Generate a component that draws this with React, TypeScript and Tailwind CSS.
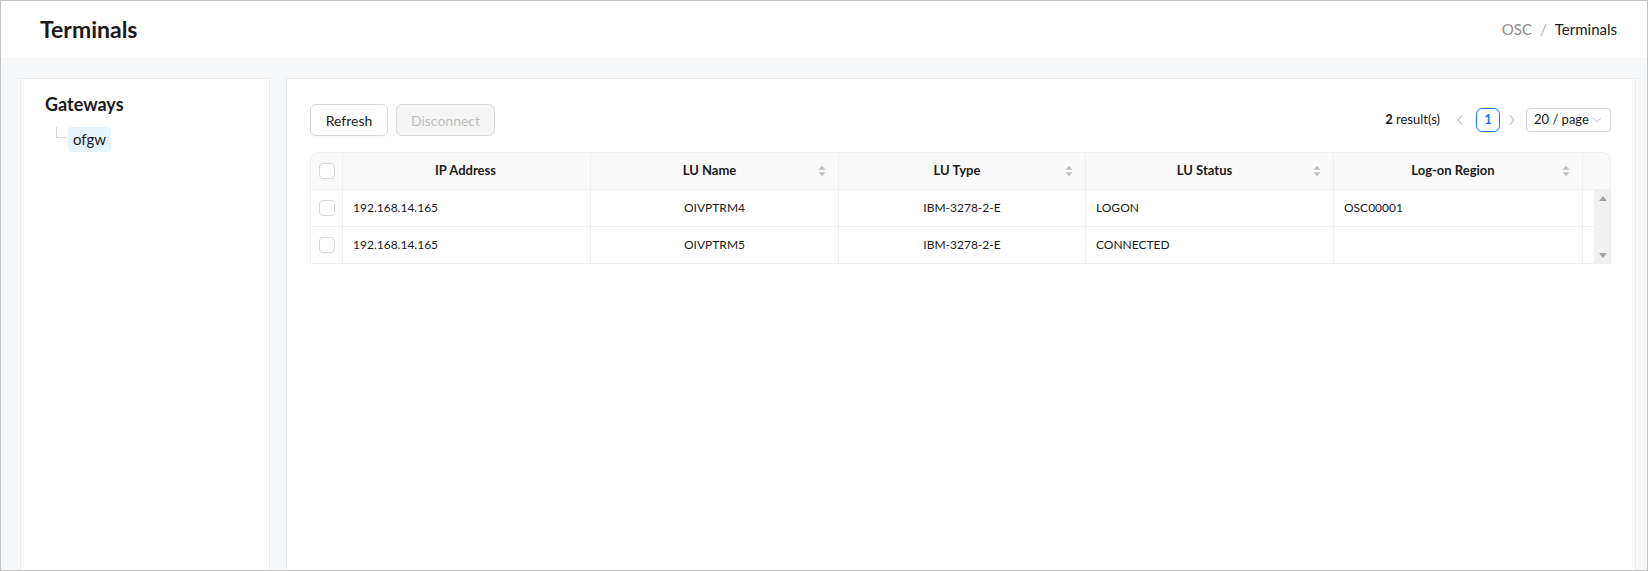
import React from 'react';

const cols = [
  { key: 'ip', label: 'IP Address', sortable: false, align: 'left' },
  { key: 'luName', label: 'LU Name', sortable: true, align: 'center' },
  { key: 'luType', label: 'LU Type', sortable: true, align: 'center' },
  { key: 'luStatus', label: 'LU Status', sortable: true, align: 'left' },
  { key: 'region', label: 'Log-on Region', sortable: true, align: 'left' },
];

const rows = [
  { ip: '192.168.14.165', luName: 'OIVPTRM4', luType: 'IBM-3278-2-E', luStatus: 'LOGON', region: 'OSC00001' },
  { ip: '192.168.14.165', luName: 'OIVPTRM5', luType: 'IBM-3278-2-E', luStatus: 'CONNECTED', region: '' },
];

const SortIcon = () => (
  <svg width="8" height="12" viewBox="0 0 8 12" className="shrink-0">
    <path d="M4 0.8 L7.4 4.8 H0.6 Z" fill="#bfbfbf" />
    <path d="M4 11.2 L7.4 7.2 H0.6 Z" fill="#bfbfbf" />
  </svg>
);

const Checkbox = () => (
  <div className="w-4 h-4 rounded-[4px] border border-[#d9d9d9] bg-white" />
);

export default function App() {
  return (
    <div className="w-[1648px] h-[571px] overflow-hidden border border-[#c2c2c2] bg-[#f7f8fa] flex flex-col font-['Lato','Noto_Sans',sans-serif] text-[#1a1a1a]">
      {/* Header */}
      <header className="h-[57px] shrink-0 bg-white flex items-center justify-between pl-[39px] pr-[30px]">
        <h1 className="text-[23px] font-bold leading-none">Terminals</h1>
        <nav className="flex items-center text-[15px]">
          <span className="text-[#8c8c8c]">OSC</span>
          <span className="text-[#b0b0b0] mx-[8px]">/</span>
          <span>Terminals</span>
        </nav>
      </header>

      <div className="flex-1 min-h-0 flex gap-[16px] pt-[20px] pl-[19px] pr-[11px]">
        {/* Gateways tree */}
        <aside className="w-[250px] shrink-0 h-[600px] bg-white border border-[#ebebeb] pl-[24px] pt-[12px]">
          <h2 className="text-[18px] font-bold leading-[27px]">Gateways</h2>
          <div className="flex items-start mt-[9px] ml-[11px]">
            <div className="w-[10px] h-[11px] border-l border-b border-[#d9d9d9] mr-[2px]" />
            <span className="h-[25px] px-[5px] rounded-[4px] bg-[#e6f4ff] text-[15px] leading-[25px]">ofgw</span>
          </div>
        </aside>

        {/* Terminals table */}
        <main className="flex-1 h-[600px] bg-white border border-[#ebebeb] pt-[25px] pl-[23px] pr-[24px]">
          <div className="flex items-center justify-between h-[32px]">
            <div className="flex gap-[8px]">
              <button className="h-[32px] w-[78px] rounded-[6px] border border-[#d9d9d9] bg-white text-[14px] shadow-[0_2px_0_rgba(0,0,0,0.02)]">
                Refresh
              </button>
              <button className="h-[32px] w-[99px] rounded-[6px] border border-[#d9d9d9] bg-[#f5f5f5] text-[14px] text-[#bfbfbf]">
                Disconnect
              </button>
            </div>
            <div className="flex items-center text-[13px] whitespace-nowrap">
              <span className="mr-[16px]">
                <b className="font-bold">2</b> result(s)
              </span>
              <svg width="8" height="12" viewBox="0 0 8 12" className="mr-[12px]">
                <path d="M6 1.5 L2 6 L6 10.5" stroke="#c8c8c8" strokeWidth="1.2" fill="none" />
              </svg>
              <div className="w-[24px] h-[24px] rounded-[6px] border border-[#1677ff] text-[#1677ff] font-bold flex items-center justify-center">
                1
              </div>
              <svg width="8" height="12" viewBox="0 0 8 12" className="ml-[8px] mr-[10px]">
                <path d="M2 1.5 L6 6 L2 10.5" stroke="#c8c8c8" strokeWidth="1.2" fill="none" />
              </svg>
              <div className="w-[85px] h-[24px] rounded-[4px] border border-[#d9d9d9] flex items-center justify-between pl-[7px] pr-[8px] text-[13px]">
                <span>20 / page</span>
                <svg width="10" height="6" viewBox="0 0 10 6">
                  <path d="M1 1 L5 5 L9 1" stroke="#c8c8c8" strokeWidth="1" fill="none" />
                </svg>
              </div>
            </div>
          </div>

          <div className="mt-[16px] w-[1301px] text-[12px]">
            {/* table header */}
            <div className="grid grid-cols-[32px_248px_248px_247px_248px_249px_29px] h-[38px] bg-[#fafafa] border border-[#f0f0f0] rounded-t-[8px] text-[13px] font-bold">
              <div className="flex items-center justify-center border-r border-[#f0f0f0]">
                <Checkbox />
              </div>
              {cols.map((c) => (
                <div key={c.key} className="flex items-center border-r border-[#f0f0f0] pl-[10px] pr-[12px]">
                  <span className="flex-1 text-center">{c.label}</span>
                  {c.sortable && <SortIcon />}
                </div>
              ))}
              <div />
            </div>

            {/* table body */}
            <div className="flex">
              <div className="flex-1">
                {rows.map((r, i) => (
                  <div key={i} className="grid grid-cols-[32px_248px_248px_247px_248px_249px_11px] h-[37px] border-b border-l border-[#f0f0f0]">
                    <div className="flex items-center justify-center border-r border-[#f0f0f0]">
                      <Checkbox />
                    </div>
                    {cols.map((c) => (
                      <div
                        key={c.key}
                        className={`flex items-center border-r border-[#f0f0f0] px-[10px] ${c.align === 'center' ? 'justify-center' : 'justify-start'}`}
                      >
                        {r[c.key as keyof typeof r]}
                      </div>
                    ))}
                    <div />
                  </div>
                ))}
              </div>
              {/* scrollbar */}
              <div className="w-[18px] bg-[#f0f0f0] flex flex-col items-center justify-between py-[6px]">
                <svg width="8" height="5" viewBox="0 0 8 5">
                  <path d="M4 0 L8 5 H0 Z" fill="#a3a3a3" />
                </svg>
                <svg width="8" height="5" viewBox="0 0 8 5">
                  <path d="M4 5 L8 0 H0 Z" fill="#a3a3a3" />
                </svg>
              </div>
            </div>
          </div>
        </main>
      </div>
    </div>
  );
}
